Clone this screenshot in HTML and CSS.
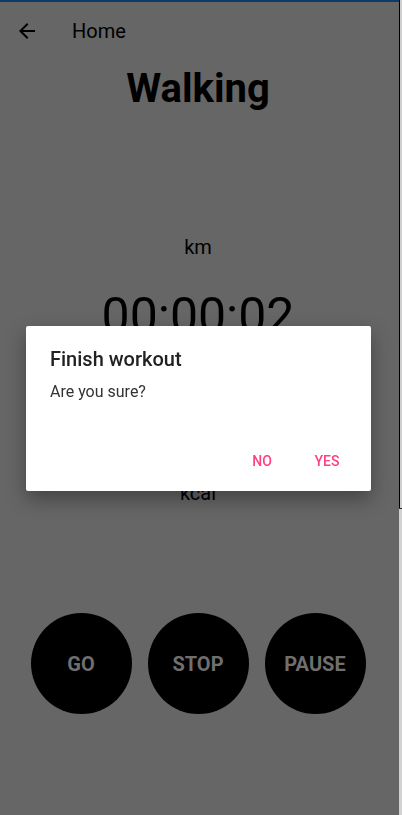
FILE: index.html
```html
<!DOCTYPE html>
<html>
<head>
<meta charset="utf-8">
<link rel="stylesheet" href="styles.css">
</head>
<body>
<div class="page">
  <main class="app">
    <header class="toolbar">
      <svg class="back" width="24" height="24" viewBox="0 0 24 24"><path d="M20 11H7.83l5.59-5.59L12 4l-8 8 8 8 1.41-1.41L7.83 13H20v-2z" fill="#000"/></svg>
      <span class="toolbar-title">Home</span>
    </header>
    <h1 class="activity">Walking</h1>
    <div class="unit km">km</div>
    <div class="timer">00:00:02</div>
    <div class="unit kcal">kcal</div>
    <div class="controls">
      <button class="round">GO</button>
      <button class="round">STOP</button>
      <button class="round">PAUSE</button>
    </div>
  </main>
  <div class="edge"><div class="edge-top"></div><div class="edge-bottom"></div></div>
</div>
<div class="dialog-layer">
  <div class="dialog">
    <div class="dialog-title">Finish workout</div>
    <div class="dialog-msg">Are you sure?</div>
    <div class="dialog-actions">
      <button class="action">NO</button>
      <button class="action">YES</button>
    </div>
  </div>
</div>
</body>
</html>
```
FILE: styles.css
```css
html, body {
  margin: 0;
  padding: 0;
  background: #666666;
  font-family: Roboto, "Liberation Sans", sans-serif;
}
.page {
  display: flex;
  width: 402px;
  height: 815px;
}
.app {
  width: 399px;
  height: 815px;
  box-sizing: border-box;
  border-top: 2px solid #0e3b63;
  padding-right: 3px;
  display: flex;
  flex-direction: column;
  align-items: stretch;
  background: #666666;
}
.edge {
  width: 3px;
  display: flex;
  flex-direction: column;
}
.edge-top {
  height: 508px;
  border-left: 1px solid #000;
  background: #cfcfcf;
}
.edge-bottom {
  flex: 1;
  background: #d2d2d2;
  border-top: 1px solid #222;
}
.toolbar {
  height: 58px;
  display: flex;
  align-items: center;
  padding-left: 15px;
}
.back { display: block; }
.toolbar-title {
  margin-left: 33px;
  font-size: 20px;
  color: #000;
  line-height: 23px;
}
.activity {
  margin: 5px 0 0;
  font-size: 40px;
  font-weight: 700;
  line-height: 47px;
  text-align: center;
  color: #000;
}
.unit {
  font-size: 20px;
  line-height: 23px;
  text-align: center;
  color: #000;
}
.km { margin-top: 124px; }
.timer {
  margin-top: 28px;
  font-size: 50px;
  line-height: 59px;
  text-align: center;
  color: #000;
  font-weight: 400;
}
.kcal { margin-top: 136px; }
.controls {
  margin-top: 108px;
  display: flex;
  justify-content: center;
  gap: 16px;
}
.round {
  width: 101px;
  height: 101px;
  border-radius: 50%;
  border: none;
  background: #000;
  color: #6f6f6f;
  font-family: Roboto, "Liberation Sans", sans-serif;
  font-size: 20px;
  font-weight: 700;
  padding: 0;
}
.dialog-layer {
  position: fixed;
  top: 2px;
  left: 0;
  right: 5px;
  bottom: 0;
  display: flex;
  align-items: center;
  justify-content: center;
}
.dialog {
  width: 345px;
  height: 165px;
  box-sizing: border-box;
  background: #fff;
  border-radius: 2px;
  box-shadow: 0 8px 20px rgba(0,0,0,0.35);
  padding: 22px 0 0 24px;
  display: flex;
  flex-direction: column;
}
.dialog-title {
  font-size: 20px;
  font-weight: 500;
  line-height: 23px;
  color: #212121;
}
.dialog-msg {
  margin-top: 11px;
  font-size: 16px;
  line-height: 19px;
  color: #333;
}
.dialog-actions {
  margin-top: auto;
  display: flex;
  justify-content: flex-end;
  padding: 0 12px 12px 0;
  gap: 1px;
}
.action {
  min-width: 64px;
  height: 36px;
  border: none;
  background: transparent;
  color: #ff4081;
  font-family: Roboto, "Liberation Sans", sans-serif;
  font-size: 14px;
  font-weight: 500;
  padding: 0 8px;
}
```
